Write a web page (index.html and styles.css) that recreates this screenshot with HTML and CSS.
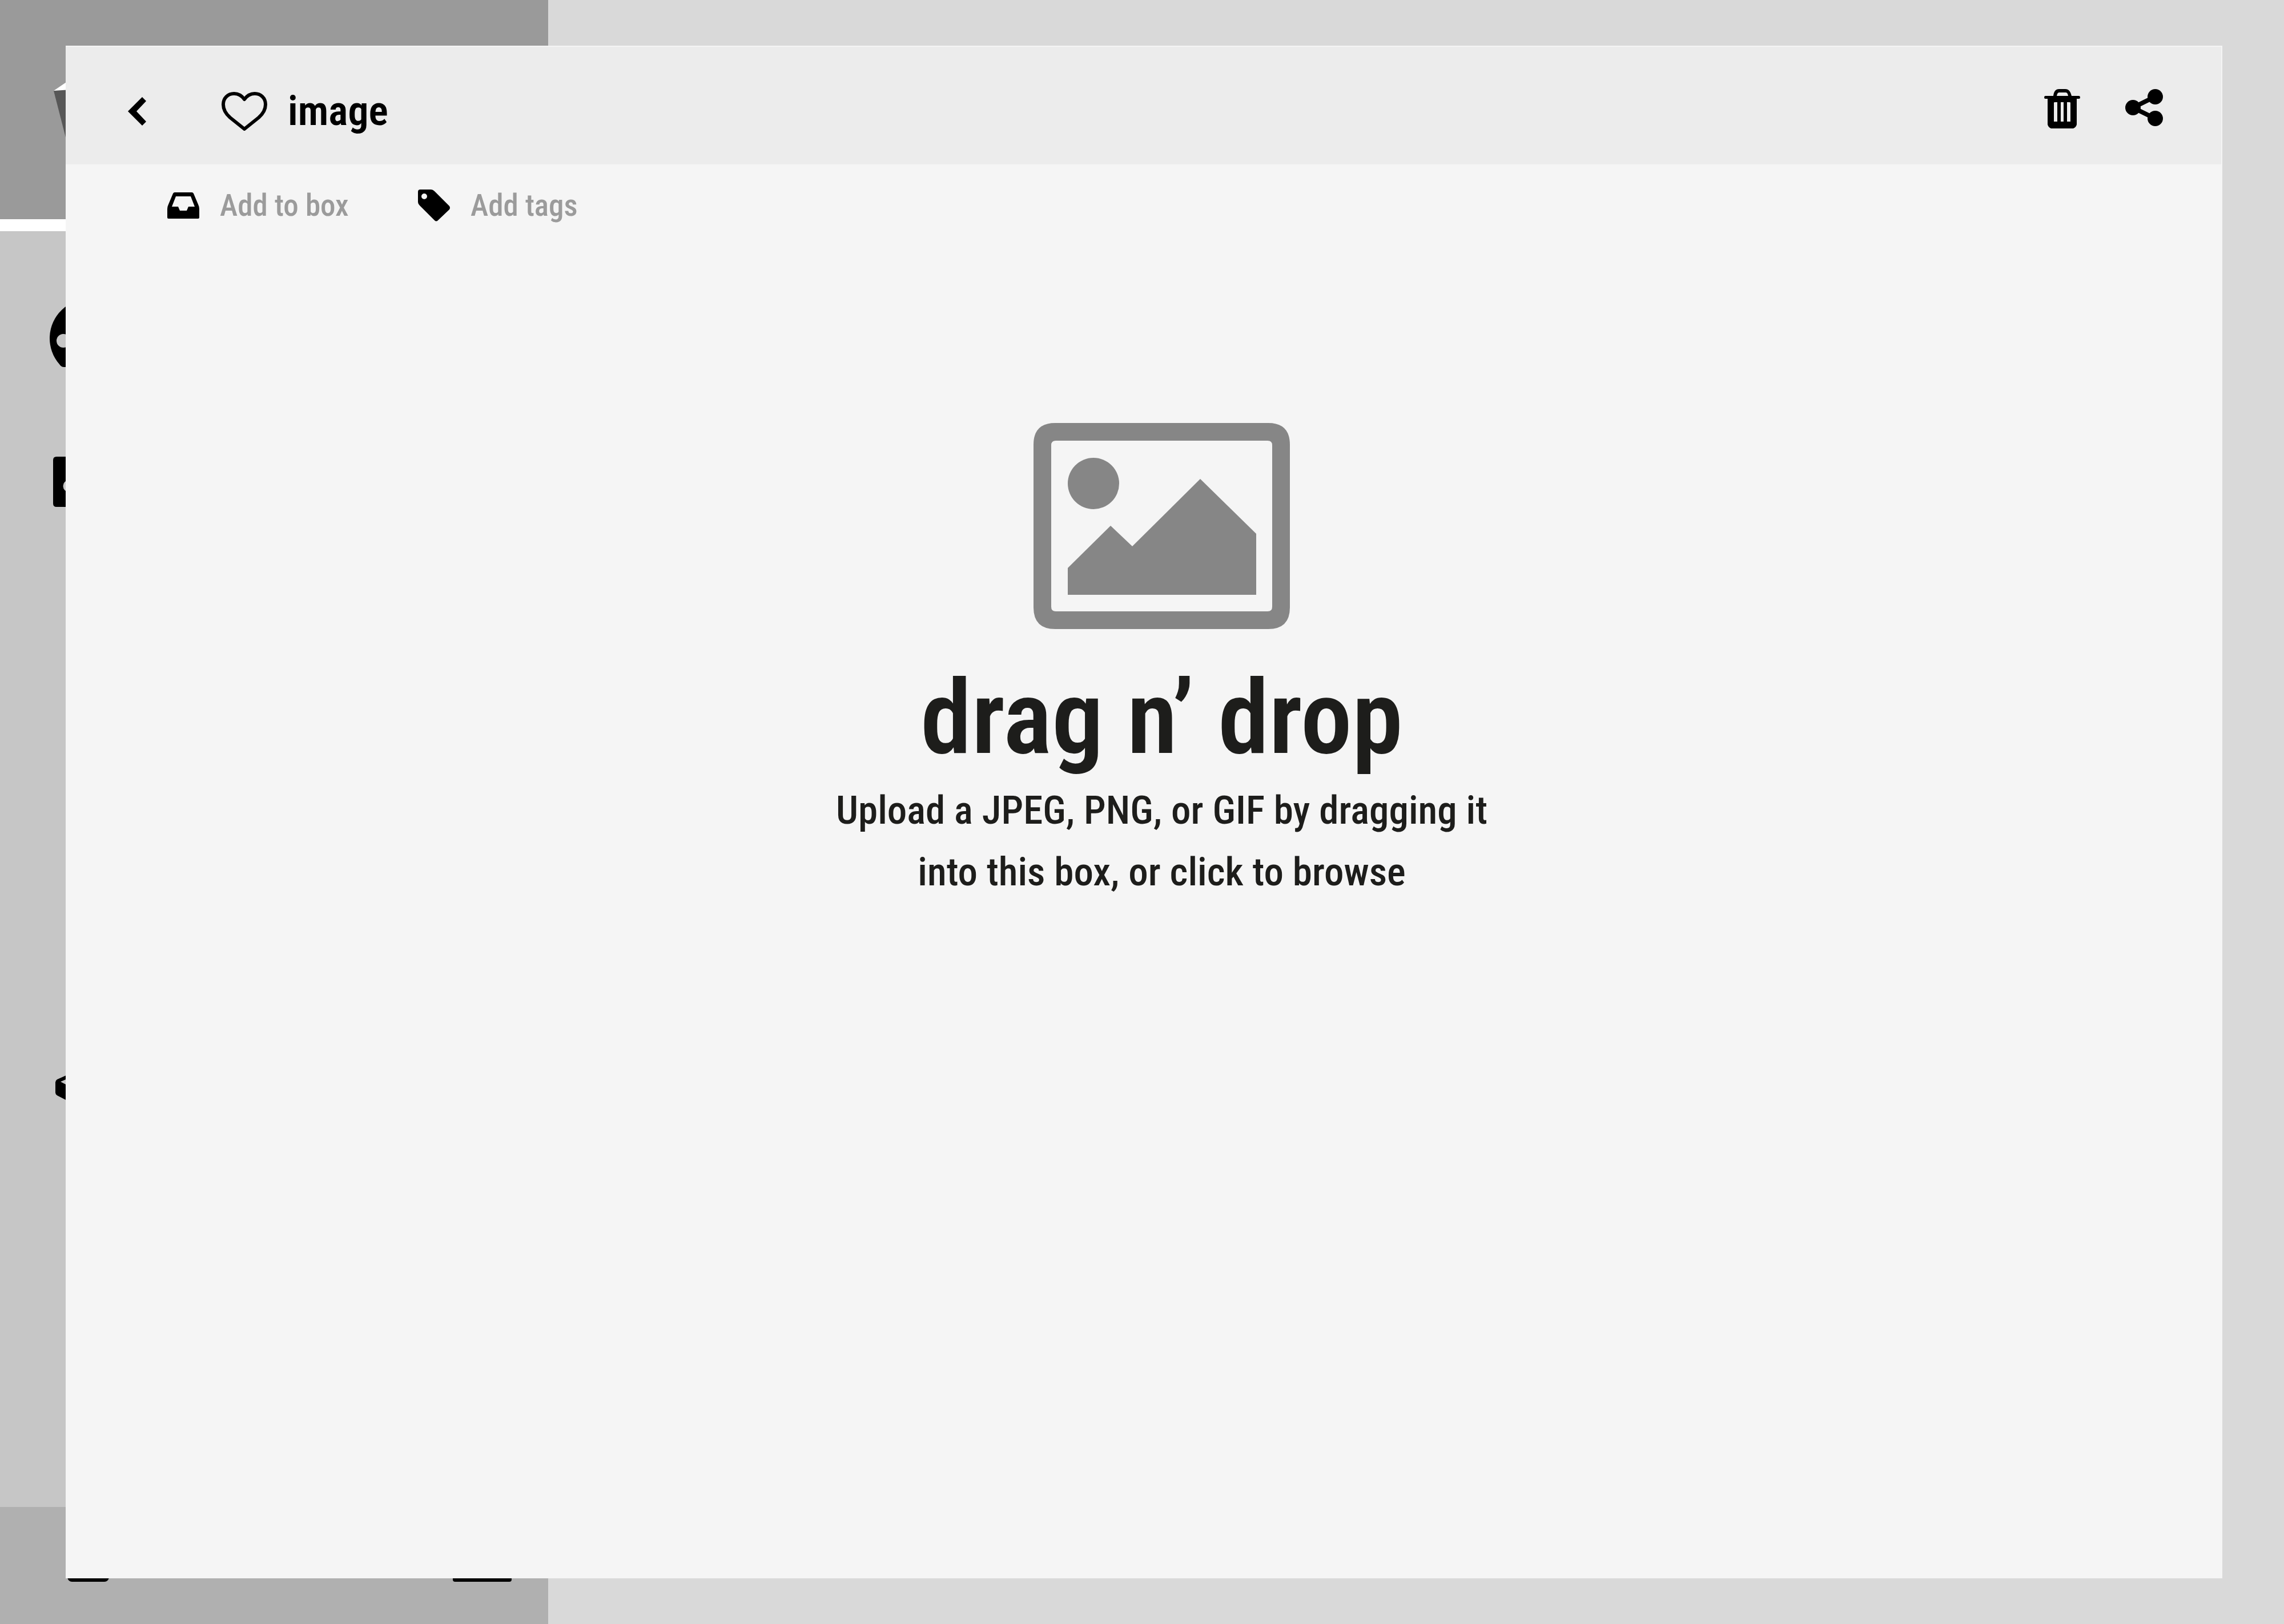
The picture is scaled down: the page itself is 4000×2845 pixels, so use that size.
FILE: index.html
```html
<!DOCTYPE html>
<html lang="en">
<head>
<meta charset="utf-8">
<meta name="viewport" content="width=device-width, initial-scale=1">
<title>image</title>
<link rel="stylesheet" href="styles.css">
</head>
<body>
<div class="app">
  <aside class="sidebar">
    <header class="sidebar-head">
      <svg class="logo" viewBox="0 0 120 120" aria-hidden="true"><path fill="#fff" d="M0 15 22 0h76l22 15-60 6z"/><path fill="#575757" d="M0 15 60 11l60 4-27 105H27z"/></svg>
    </header>
    <nav class="sidebar-nav" aria-label="Main">
      <a class="nav-dashboard" href="#dashboard" aria-label="Dashboard">
        <svg width="138" height="118" viewBox="0 0 138 118"><path fill-rule="evenodd" d="M25 118Q20 118 17 113A69 69 0 1 1 121 113Q118 118 113 118ZM24 60a12 12 0 1 0 0 24 12 12 0 0 0 0-24z"/></svg>
      </a>
      <a class="nav-photos" href="#photos" aria-label="Photos">
        <svg width="120" height="88" viewBox="0 0 120 88"><path fill-rule="evenodd" d="M6 0h108q6 0 6 6v76q0 6-6 6H6q-6 0-6-6V6q0-6 6-6zM28 41a10 10 0 1 0 0 21 10 10 0 0 0 0-21z"/></svg>
      </a>
      <a class="nav-boxes" href="#boxes" aria-label="Boxes">
        <svg width="64" height="60" viewBox="0 0 64 60"><path fill-rule="evenodd" d="M3 13 32 0l29 13q3 2 3 5v18q0 3-3 5L32 56 3 41q-3-2-3-5V18q0-3 3-5zM9 17l23-10 23 10-23 12z"/></svg>
      </a>
    </nav>
    <footer class="sidebar-foot">
      <a href="#trash" aria-label="Trash"><svg width="73" height="80" viewBox="0 0 73 80"><path d="M0 0h73v73q-2 7-8 7H8q-6 0-8-7z"/></svg></a>
      <a href="#archive" aria-label="Archive"><svg width="103" height="80" viewBox="0 0 103 80"><path d="M0 0h103v76q0 4-4 4H4q-4 0-4-4z"/></svg></a>
    </footer>
  </aside>

  <main class="modal">
    <header class="modal-head">
      <button class="icon-button back" type="button" aria-label="Back"><svg width="32" height="50" viewBox="0 0 32 50"><path d="M25 0 32 7 15 25 32 43 25 50 0 25z"/></svg></button>
      <button class="icon-button like" type="button" aria-label="Like"><svg width="80" height="68" viewBox="0 0 80 68"><path fill="none" stroke="#000" stroke-width="6" stroke-linejoin="round" d="M40 13C35 6 29 3 22 3 11 3 3 11 3 22c0 9 4 16 12 23l25 20 25-20c8-7 12-14 12-23C77 11 69 3 58 3c-7 0-13 3-18 10z"/></svg></button>
      <h1 class="title">image</h1>
      <div class="actions">
        <button class="icon-button" type="button" aria-label="Delete"><svg width="63" height="69" viewBox="0 0 63 69"><path fill-rule="evenodd" d="M16 12C17 4 20 0 26 0h11c6 0 9 4 11 12h13q2 0 2 2.500t-2 2.500h-4v45q-1 5-6 7H12q-5-2-6-7V17H2q-2 0-2-2.500T2 12zM22 12h20q-1-6-4-6H26q-3 0-4 6zM17 24v33h6V23h-4q-2 0-2 1zM29 23v34h5V23zM40 23v34h6V24q0-1-2-1z"/></svg></button>
        <button class="icon-button" type="button" aria-label="Share"><svg width="66" height="65" viewBox="0 0 66 65"><path fill="none" stroke="#000" stroke-width="8" d="M52 13.500 13.500 32.500 52 51.500"/><circle cx="13.500" cy="32.500" r="13.500"/><circle cx="52.500" cy="13.500" r="13.500"/><circle cx="52.500" cy="51.500" r="13.500"/></svg></button>
      </div>
    </header>

    <div class="meta">
      <div class="field">
        <label for="box"><svg width="56" height="46" viewBox="0 0 56 46" role="img" aria-label="Box"><path fill-rule="evenodd" d="M13 0h30q2 0 3 2l8 19q2 4 2 8v15q0 2-2 2H2q-2 0-2-2V29q0-4 2-8l8-19q1-2 3-2zM15 7 8 25h11l3 7h12l3-7h11L41 7z"/></svg></label>
        <input id="box" type="text" placeholder="Add to box">
      </div>
      <div class="field">
        <label for="tags"><svg width="56" height="56" viewBox="0 0 56 56" role="img" aria-label="Tags"><path fill-rule="evenodd" d="M4 0h19q3 0 6 3l26 26q2 3 0 6L35 54q-3 3-6 0L3 28q-3-3-3-6V4q0-4 4-4zM11 7a5 5 0 1 0 0 10 5 5 0 0 0 0-10z"/></svg></label>
        <input id="tags" type="text" placeholder="Add tags">
      </div>
    </div>

    <label class="dropzone">
      <input class="file" type="file" accept="image/jpeg,image/png,image/gif">
      <svg width="449" height="361" viewBox="0 0 449 361" aria-hidden="true"><path fill="#868686" fill-rule="evenodd" d="M38 0h373q38 0 38 38v285q0 38-38 38H38q-38 0-38-38V38Q0 0 38 0zM39 31q-8 0-8 8v283q0 8 8 8h371q8 0 8-8V39q0-8-8-8zM60 254l75-74 38 36L292 98l98 96v107H60z"/><circle cx="105" cy="106" r="45" fill="#868686"/></svg>
      <strong class="drop-title">drag n’ drop</strong>
      <span class="drop-text">Upload a JPEG, PNG, or GIF by dragging it<br>into this box, or click to browse</span>
    </label>
  </main>
</div>
</body>
</html>
```
FILE: styles.css
```css
* {
  box-sizing: border-box;
}

body {
  margin: 0;
  background: #d9d9d9;
  color: #000;
  font-family: "Roboto Condensed", "Liberation Sans Narrow", "Liberation Sans", sans-serif;
  font-weight: 500;
}

svg {
  display: block;
}

.app {
  position: relative;
  display: grid;
  grid-template-columns: 24% 1fr;
  min-height: 100vh;
}

/* Sidebar */
.sidebar {
  display: flex;
  flex-direction: column;
  background: #c6c6c6;
}

.sidebar-head {
  height: 405px;
  padding: 144px 94px 0;
  background: #9a9a9a;
  border-bottom: 21px solid #fff;
}

.logo {
  width: 120px;
}

.sidebar-nav {
  flex: 1;
  display: flex;
  flex-direction: column;
  align-items: flex-start;
  padding: 120px 87px 0;
}

.nav-photos {
  padding: 157px 6px 0;
}

.nav-boxes {
  padding: 990px 10px 0;
}

.sidebar-foot {
  display: flex;
  justify-content: space-between;
  height: 205px;
  padding: 51px 64px 0 118px;
  background: #b0b0b0;
}

/* Editor window */
.modal {
  position: absolute;
  inset: 80px 108px 80px 115px;
  display: flex;
  flex-direction: column;
  padding: 2px 2px 0 0;
  background: #f5f5f5;
}

.modal-head {
  display: flex;
  align-items: center;
  height: 206px;
  padding: 0 102px 0 109px;
  background: #ececec;
}

.icon-button {
  padding: 0;
  border: 0;
  background: none;
  cursor: pointer;
}

.back {
  margin: 20px 132px 0 0;
}

.like {
  margin: 20px 36px 0 0;
}

.title {
  margin: 20px 0 0;
  font-size: 72px;
  font-weight: 600;
  line-height: 80px;
}

.actions {
  display: flex;
  align-items: flex-start;
  gap: 79px;
  margin: 10px 0 0 auto;
}

.meta {
  display: flex;
  gap: 48px;
  padding: 36px 178px 0;
}

.field {
  display: flex;
  align-items: center;
  gap: 36px;
}

.field input {
  width: 299px;
  height: 72px;
  padding: 0;
  border: 0;
  background: none;
  color: #000;
  font-family: inherit;
  font-size: 53px;
  font-weight: inherit;
}

.field input::placeholder {
  color: #9b9b9b;
  opacity: 1;
}

/* Upload area */
.dropzone {
  flex: 1;
  display: flex;
  flex-direction: column;
  align-items: center;
  padding: 345px 0 0 64px;
  color: #1d1d1b;
  text-align: center;
  cursor: pointer;
}

.file {
  position: absolute;
  width: 1px;
  height: 1px;
  opacity: 0;
}

.drop-title {
  margin-top: 48px;
  font-size: 180px;
  font-weight: 600;
  line-height: 216px;
}

.drop-text {
  font-size: 69px;
  line-height: 108px;
}
```
